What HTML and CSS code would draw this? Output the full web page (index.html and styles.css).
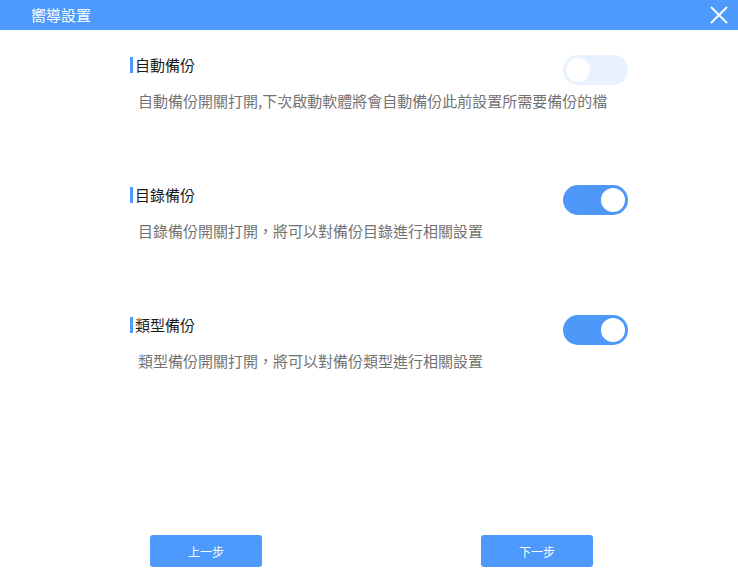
FILE: index.html
```html
<!DOCTYPE html>
<html lang="zh-Hant">
<head>
<meta charset="utf-8">
<title>嚮導設置</title>
<link rel="stylesheet" href="styles.css">
</head>
<body>
<div class="app">
  <div class="titlebar">
    <span class="title">嚮導設置</span>
    <svg class="close" width="18" height="18" viewBox="0 0 18 18"><path d="M1 1 L17 17 M17 1 L1 17" stroke="#fff" stroke-width="1.8" fill="none"/></svg>
  </div>
  <div class="content">
    <div class="section">
      <div class="row">
        <div class="heading">自動備份</div>
        <div class="toggle off"><span class="knob"></span></div>
      </div>
      <div class="desc">自動備份開關打開,下次啟動軟體將會自動備份此前設置所需要備份的檔</div>
    </div>
    <div class="section">
      <div class="row">
        <div class="heading">目錄備份</div>
        <div class="toggle on"><span class="knob"></span></div>
      </div>
      <div class="desc">目錄備份開關打開，將可以對備份目錄進行相關設置</div>
    </div>
    <div class="section">
      <div class="row">
        <div class="heading">類型備份</div>
        <div class="toggle on"><span class="knob"></span></div>
      </div>
      <div class="desc">類型備份開關打開，將可以對備份類型進行相關設置</div>
    </div>
  </div>
  <div class="footer">
    <button class="btn">上一步</button>
    <button class="btn">下一步</button>
  </div>
</div>
</body>
</html>
```

FILE: styles.css
```css
html, body {
  margin: 0;
  padding: 0;
  background: #fff;
}
body {
  font-family: "Noto Sans CJK TC", "Noto Sans", sans-serif;
}
.app {
  width: 738px;
  height: 588px;
  display: flex;
  flex-direction: column;
}
.titlebar {
  height: 30px;
  background: #4d9afc;
  display: flex;
  align-items: center;
  justify-content: space-between;
  padding: 0 10px 0 31px;
  flex-shrink: 0;
}
.title {
  color: #fff;
  font-size: 15px;
  line-height: 30px;
}
.close {
  display: block;
}
.content {
  flex: 1;
  padding: 25px 110px 0 130px;
}
.section {
  height: 130px;
}
.row {
  display: flex;
  justify-content: space-between;
  align-items: flex-start;
}
.heading {
  margin-top: 2px;
  border-left: 3px solid #4d9afc;
  padding-left: 2px;
  font-size: 15px;
  line-height: 16px;
  color: #1a1a1a;
}
.toggle {
  width: 65px;
  height: 30px;
  border-radius: 15px;
  display: flex;
  align-items: center;
  padding: 0 3px;
  box-sizing: border-box;
}
.toggle.off {
  background: #e8f2fe;
  justify-content: flex-start;
}
.toggle.on {
  background: #4d98f8;
  justify-content: flex-end;
}
.knob {
  width: 24px;
  height: 24px;
  border-radius: 50%;
  background: #fff;
}
.desc {
  margin-top: 6px;
  padding-left: 8px;
  font-size: 15px;
  line-height: 20px;
  color: #737373;
}
.footer {
  display: flex;
  justify-content: space-between;
  padding: 0 145px 21px 150px;
}
.btn {
  width: 112px;
  height: 32px;
  border: none;
  border-radius: 3px;
  background: #4d9afc;
  color: #fff;
  font-family: "Noto Sans CJK TC", "Noto Sans", sans-serif;
  font-size: 12px;
  padding: 0;
}
```
